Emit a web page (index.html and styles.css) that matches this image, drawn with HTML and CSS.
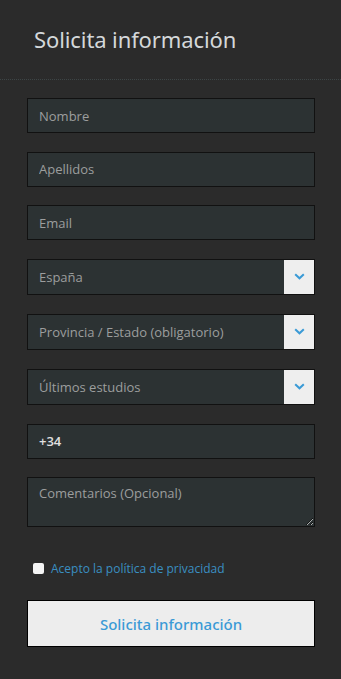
FILE: index.html
```html
<!DOCTYPE html>
<html lang="es">
<head>
    <meta charset="UTF-8">
    <meta name="viewport" content="width=device-width, initial-scale=1.0">
    <title>Solicita información</title>
    <link rel="stylesheet" href="styles.css">
</head>
<body>
    <div class="form-header">
        <h1>Solicita información</h1>
    </div>

    <form class="lead-form">
        <input type="text" class="field" placeholder="Nombre">
        <input type="text" class="field" placeholder="Apellidos">
        <input type="email" class="field" placeholder="Email">

        <div class="select-box">
            <span class="select-text">España</span>
            <span class="select-arrow">
                <svg width="11" height="7" viewBox="0 0 11 7"><path d="M1.2 1.2 L5.5 5.3 L9.8 1.2" fill="none" stroke="#3a9ad6" stroke-width="2"/></svg>
            </span>
        </div>
        <div class="select-box">
            <span class="select-text">Provincia / Estado (obligatorio)</span>
            <span class="select-arrow">
                <svg width="11" height="7" viewBox="0 0 11 7"><path d="M1.2 1.2 L5.5 5.3 L9.8 1.2" fill="none" stroke="#3a9ad6" stroke-width="2"/></svg>
            </span>
        </div>
        <div class="select-box">
            <span class="select-text">Últimos estudios</span>
            <span class="select-arrow">
                <svg width="11" height="7" viewBox="0 0 11 7"><path d="M1.2 1.2 L5.5 5.3 L9.8 1.2" fill="none" stroke="#3a9ad6" stroke-width="2"/></svg>
            </span>
        </div>

        <input type="tel" class="field phone" value="+34">
        <textarea class="field comments" placeholder="Comentarios (Opcional)"></textarea>

        <label class="privacy">
            <span class="check"></span>
            <span class="privacy-text">Acepto la política de privacidad</span>
        </label>

        <button type="button" class="submit">Solicita información</button>
    </form>
</body>
</html>
```

FILE: styles.css
```css
body {
    margin: 0;
    background-color: #2b2b2b;
    font-family: "Open Sans", Arial, sans-serif;
    width: 341px;
    height: 679px;
    overflow: hidden;
}
.form-header {
    height: 80px;
    border-bottom: 1px dotted #3d4546;
    padding-left: 34px;
    box-sizing: border-box;
}
h1 {
    margin: 0;
    padding-top: 23px;
    font-family: "Noto Sans", sans-serif;
    font-weight: normal;
    font-size: 22px;
    line-height: 32px;
    letter-spacing: -0.1px;
    color: #d4d8da;
}
.lead-form {
    display: flex;
    flex-direction: column;
    padding: 18px 26px 0 27px;
}
.field {
    box-sizing: border-box;
    width: 100%;
    height: 35px;
    margin: 0 0 18.5px 0;
    padding: 0 11px;
    background: #2c3233;
    border: 1px solid #111;
    border-radius: 0;
    font-family: "Open Sans", Arial, sans-serif;
    font-size: 13px;
    color: #e0e0e0;
    outline: none;
}
.field::placeholder {
    color: #9c9e9e;
}
.phone {
    font-weight: 600;
}
.select-box {
    display: flex;
    height: 36px;
    box-sizing: border-box;
    margin-bottom: 19px;
    background: #2c3233;
    border: 1px solid #111;
}
.select-text {
    flex: 1;
    padding-left: 11px;
    line-height: 34px;
    font-size: 13px;
    color: #9c9e9e;
}
.select-arrow {
    width: 30px;
    background: #eeeeee;
    display: flex;
    align-items: center;
    justify-content: center;
}
.comments {
    height: 50px;
    padding-top: 6px;
    resize: vertical;
    margin-bottom: 33px;
}
.privacy {
    display: flex;
    align-items: center;
    gap: 7px;
    padding-left: 6px;
    height: 16px;
    margin-bottom: 24px;
}
.check {
    width: 11px;
    height: 11px;
    background: #f4f4f4;
    border-radius: 2px;
}
.privacy-text {
    font-size: 12px;
    color: #3a8fc2;
}
.submit {
    height: 47px;
    background: #ededed;
    border: 1px solid #000;
    border-radius: 0;
    font-family: "Noto Sans", sans-serif;
    font-size: 15px;
    font-weight: 500;
    color: #3a9ad6;
    cursor: pointer;
}
```
